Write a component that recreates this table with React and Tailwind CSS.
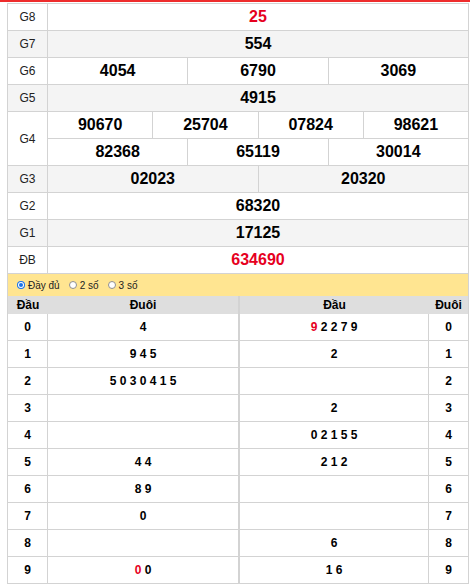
const prizes = [
  { label: "G8", rows: [["25"]], red: true },
  { label: "G7", rows: [["554"]], gray: true },
  { label: "G6", rows: [["4054", "6790", "3069"]] },
  { label: "G5", rows: [["4915"]], gray: true },
  { label: "G4", rows: [["90670", "25704", "07824", "98621"], ["82368", "65119", "30014"]] },
  { label: "G3", rows: [["02023", "20320"]], gray: true },
  { label: "G2", rows: [["68320"]] },
  { label: "G1", rows: [["17125"]], gray: true },
  { label: "ĐB", rows: [["634690"]], red: true },
];

// digits: [text, red?]
const dau = [
  [["4"]],
  [["9 4 5"]],
  [["5 0 3 0 4 1 5"]],
  [],
  [],
  [["4 4"]],
  [["8 9"]],
  [["0"]],
  [],
  [["0", true], [" 0"]],
];

const duoi = [
  [["9", true], [" 2 2 7 9"]],
  [["2"]],
  [],
  [["2"]],
  [["0 2 1 5 5"]],
  [["2 1 2"]],
  [],
  [],
  [["6"]],
  [["1 6"]],
];

function Digits({ parts }) {
  return (
    <span className="whitespace-pre">
      {parts.map(([t, red], i) => (
        <span key={i} className={red ? "text-[#e6001e]" : ""}>
          {t}
        </span>
      ))}
    </span>
  );
}

function Radio({ checked, label }) {
  return (
    <span className="flex items-center gap-[3px]">
      {checked ? (
        <span className="flex h-[8px] w-[8px] items-center justify-center rounded-full bg-[#1a73e8]">
          <span className="h-[4px] w-[4px] rounded-full bg-[#1a73e8] ring-1 ring-white" />
        </span>
      ) : (
        <span className="h-[8px] w-[8px] rounded-full border border-[#8f8f8f] bg-white" />
      )}
      <span>{label}</span>
    </span>
  );
}

export default function App() {
  return (
    <div className="h-[586px] w-[475px] bg-white font-['Liberation_Sans',Arial,sans-serif] text-black">
      <div className="h-[2px] w-[470px] bg-[#ee2c2c]" />
      <div className="mt-px ml-[7px] w-[462px] border-x border-t border-[#d3d3d3]">
        {prizes.map((p) => (
          <div
            key={p.label}
            className={`flex border-b border-[#d3d3d3] ${p.gray ? "bg-[#f4f4f4]" : "bg-white"}`}
          >
            <div className="flex w-[40px] flex-none items-center justify-center border-r border-[#d3d3d3] text-[12px] text-[#222]">
              {p.label}
            </div>
            <div className="flex-1">
              {p.rows.map((r, ri) => (
                <div
                  key={ri}
                  className={`flex h-[26px] ${ri > 0 ? "h-[27px] border-t border-[#d3d3d3]" : ""}`}
                >
                  {r.map((n, ci) => (
                    <div
                      key={ci}
                      className={`flex flex-1 items-center justify-center text-[16px] font-bold ${
                        ci > 0 ? "border-l border-[#d3d3d3]" : ""
                      } ${p.red ? "text-[#e6001e]" : ""}`}
                    >
                      {n}
                    </div>
                  ))}
                </div>
              ))}
            </div>
          </div>
        ))}

        <div className="flex h-[22px] items-center gap-[9px] bg-[#ffe591] pl-[9px] text-[10px] text-[#222]">
          <Radio checked label="Đầy đủ" />
          <Radio label="2 số" />
          <Radio label="3 số" />
        </div>

        <div className="flex">
          <div className="w-[231px] border-r border-[#d3d3d3]">
            <div className="flex h-[18px] items-center bg-[#dedede] text-[12px] font-bold">
              <div className="w-[40px] text-center">Đầu</div>
              <div className="flex-1 text-center">Đuôi</div>
            </div>
            {dau.map((parts, i) => (
              <div key={i} className="flex h-[27px] border-b border-[#d3d3d3] text-[12px] font-bold">
                <div className="flex w-[40px] items-center justify-center border-r border-[#d3d3d3]">
                  {i}
                </div>
                <div className="flex flex-1 items-center justify-center">
                  <Digits parts={parts} />
                </div>
              </div>
            ))}
          </div>
          <div className="flex-1 border-l border-[#d3d3d3]">
            <div className="flex h-[18px] items-center bg-[#dedede] text-[12px] font-bold">
              <div className="flex-1 text-center">Đầu</div>
              <div className="w-[39px] text-center">Đuôi</div>
            </div>
            {duoi.map((parts, i) => (
              <div key={i} className="flex h-[27px] border-b border-[#d3d3d3] text-[12px] font-bold">
                <div className="flex flex-1 items-center justify-center border-r border-[#d3d3d3]">
                  <Digits parts={parts} />
                </div>
                <div className="flex w-[39px] items-center justify-center">{i}</div>
              </div>
            ))}
          </div>
        </div>
      </div>
    </div>
  );
}
